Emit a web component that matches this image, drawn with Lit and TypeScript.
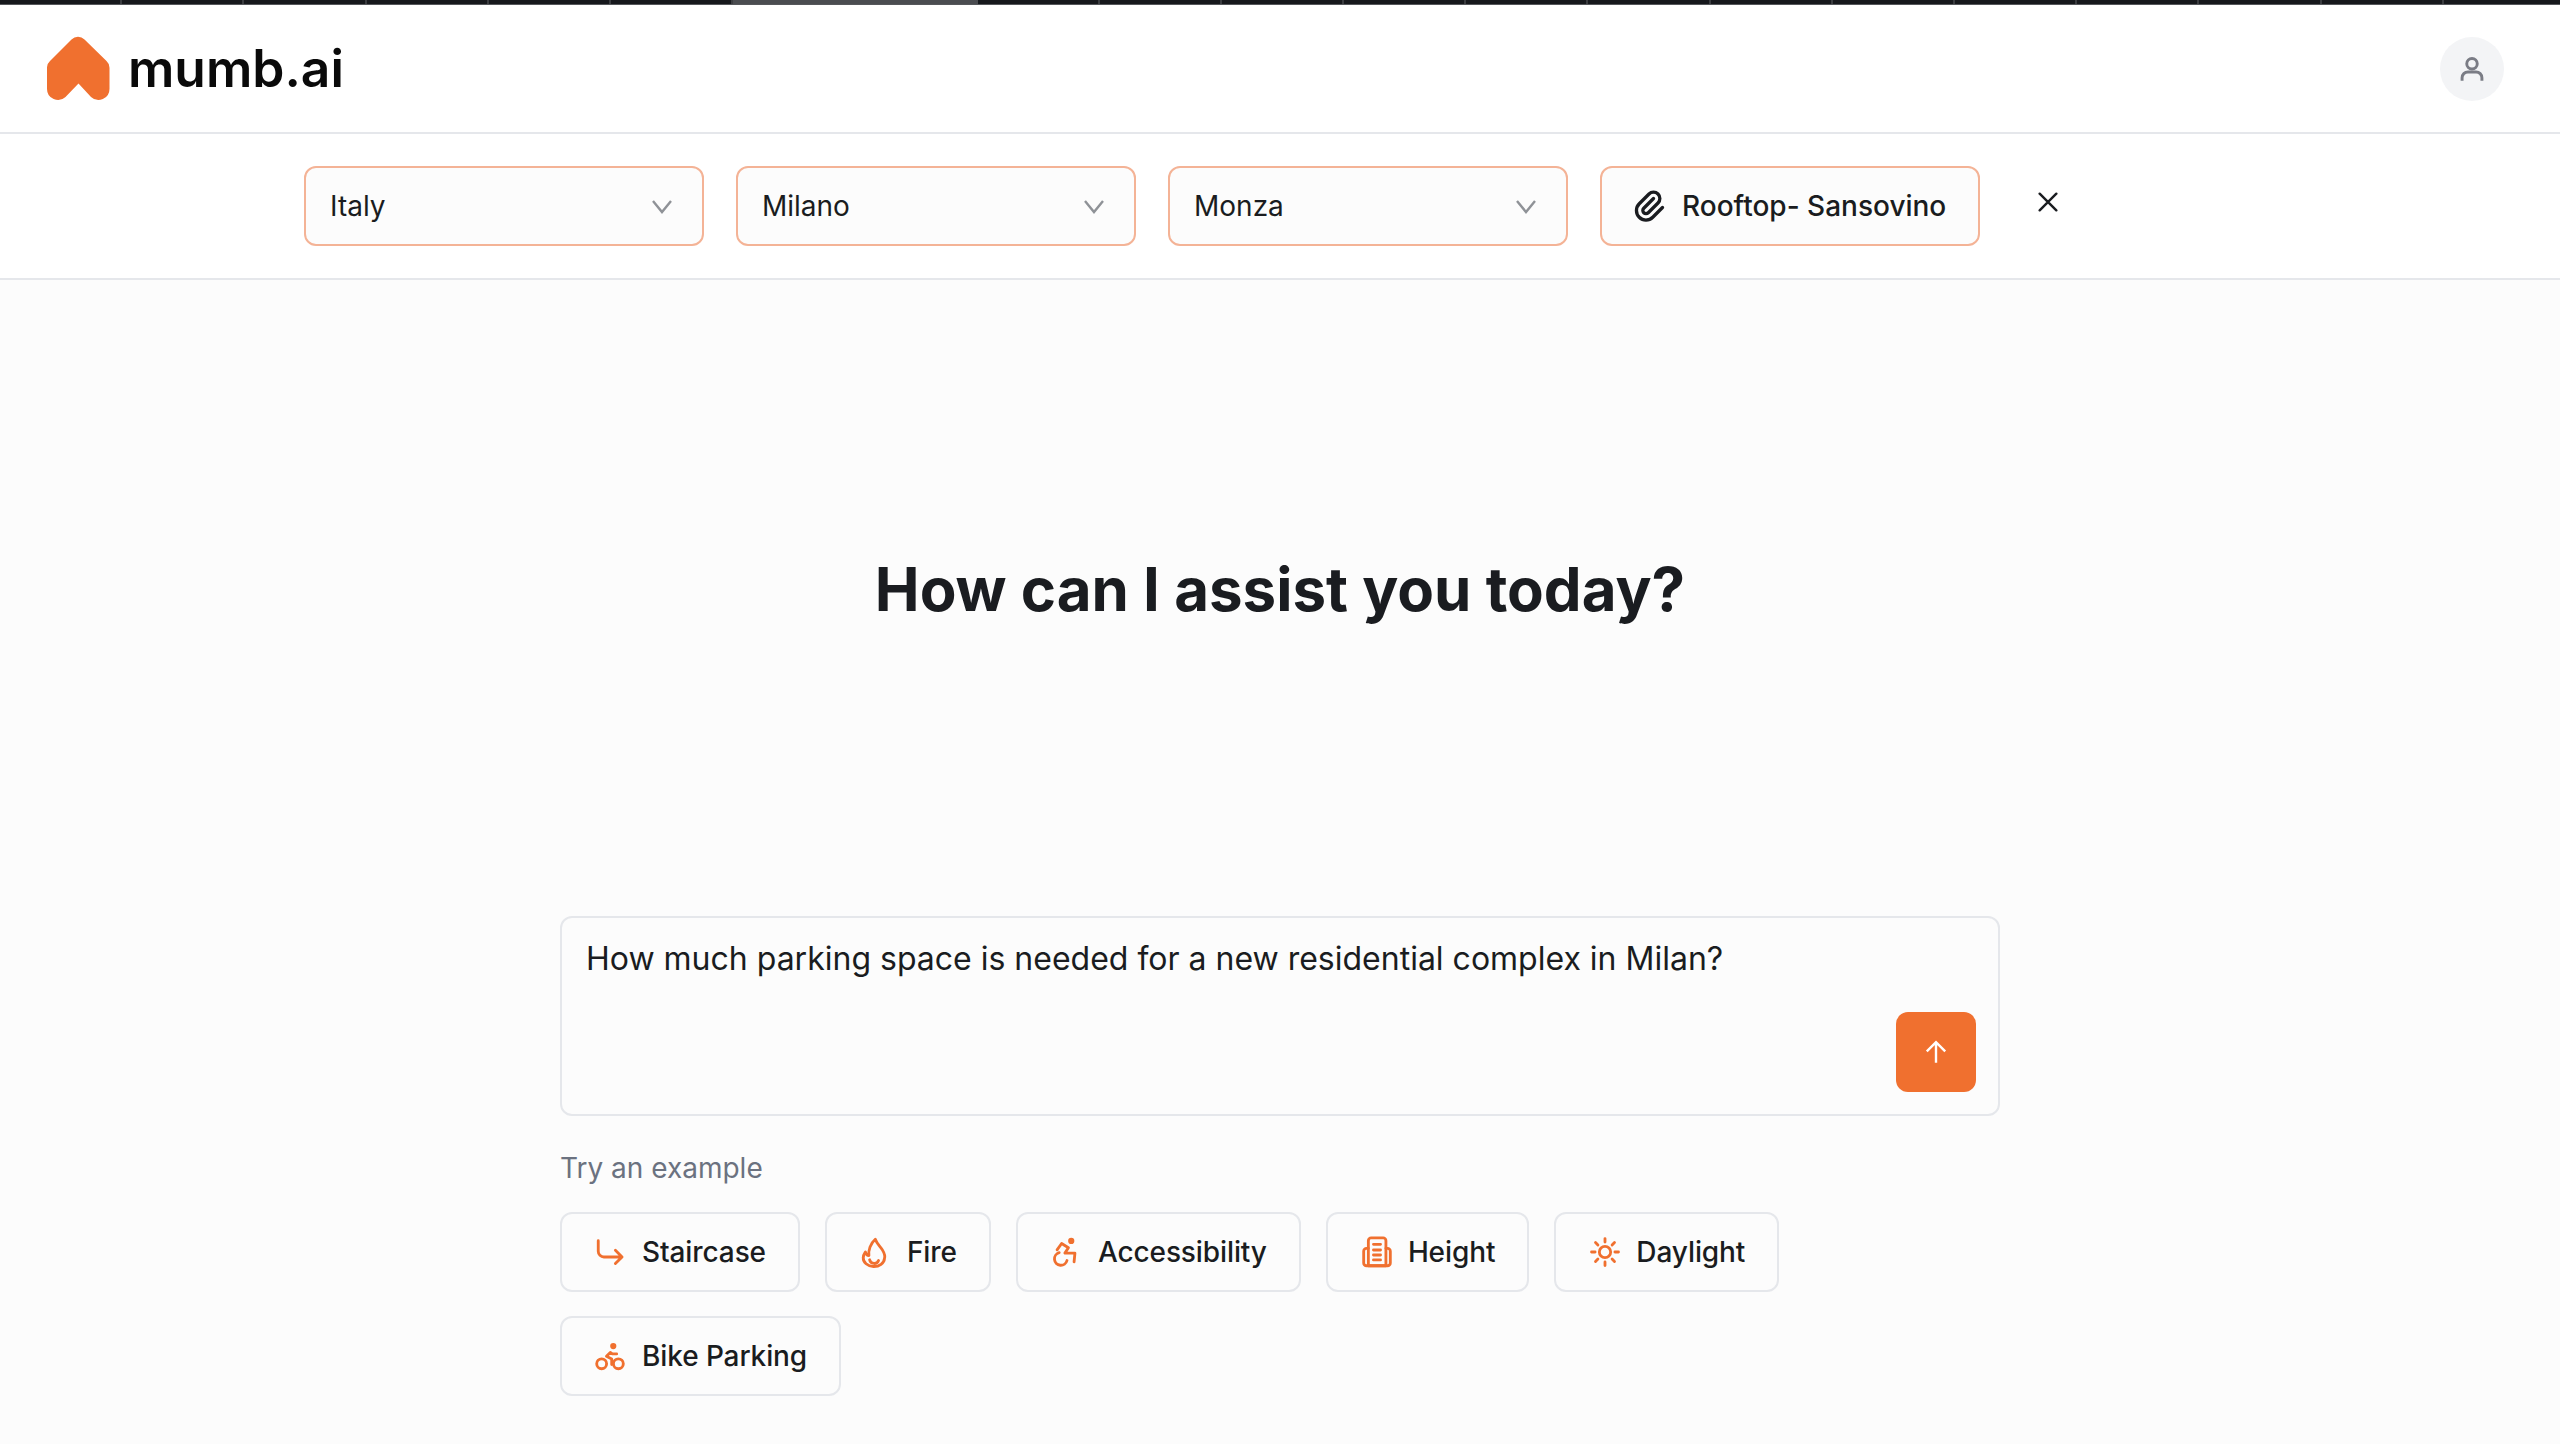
import { LitElement, html, css, svg } from "lit";
import { customElement } from "lit/decorators.js";

const icons: Record<string, unknown> = {
  Staircase: svg`<path d="M3 4v7.500a4 4 0 0 0 4 4h12.800l-4.700-4.700m0 9.400l4.700-4.700"/>`,
  Fire: svg`<path d="M11.500 3C12.500 6 15 8 16.500 10.500C18 13 18.500 15 18 16.500A7.500 6 0 0 1 3 16C3 14 3.800 13 4.500 12C5 13.500 6 14.500 7 14.500C6.500 11 8 6 11.500 3z"/><path d="M7.500 17.500a3.300 3.300 0 0 0 6.300 .5"/>`,
  Accessibility: svg`<circle cx="15" cy="4.200" r="1.200" fill="currentColor"/><path d="M5 10.500L8.200 6 13 9 10.500 12.800H17.600L17 19"/><path d="M6.500 12.500a4.500 4.500 0 1 0 5.500 5.500"/>`,
  Height: svg`<path d="M5.900 21.700V4a2 2 0 0 1 2-2h8.400a2 2 0 0 1 2 2V21.700z"/><path d="M5.900 9.400H4.600a2 2 0 0 0-2 2V19.700a2 2 0 0 0 2 2H19.400a2 2 0 0 0 2-2V11.400a2 2 0 0 0-2-2H18.300"/><path d="M9.500 6.600h5M9.500 10.600h5M9.500 14.100h5M9.500 17.600h5"/>`,
  Daylight: svg`<circle cx="12" cy="12" r="4"/><path d="M12 2.500v2.500M12 19v2.500M2.500 12H5M19 12h2.500M5.300 5.300l1.700 1.700M17 17l1.700 1.700M5.300 18.700L7 17M17 7l1.700-1.700"/>`,
  "Bike Parking": svg`<circle cx="5.400" cy="17.500" r="3.500"/><circle cx="17.200" cy="17.500" r="3.500"/><circle cx="13.600" cy="5" r="1.200" fill="currentColor"/><path d="M16 10.500H13L11.500 9.500 8.800 12.200 12.500 14.200V18"/>`,
};

const CHIPS = ["Staircase", "Fire", "Accessibility", "Height", "Daylight", "Bike Parking"];
const SELECTS = ["Italy", "Milano", "Monza"];

@customElement("app-root")
export class AppRoot extends LitElement {
  static styles = css`
    :host {
      display: block;
      width: 2560px;
      height: 1444px;
      overflow: hidden;
      background: #fcfcfc;
      font-family: Inter, "Liberation Sans", sans-serif;
      color: #1a1c20;
    }
    .strip {
      display: flex;
      height: 5px;
      background: #16181c;
      border-bottom: 1px solid #55575b;
      box-sizing: border-box;
    }
    .tab { flex: 0 0 122.2px; border-right: 2px solid #3a3c40; box-sizing: border-box; }
    .tab.active { flex-basis: 244.4px; background: #4a4c50; border-right-color: #4a4c50; }
    header {
      height: 129px;
      box-sizing: border-box;
      background: #fff;
      border-bottom: 2px solid #e5e7eb;
      display: flex;
      align-items: center;
      justify-content: space-between;
      padding: 0 56px 0 47px;
    }
    .brand { display: flex; align-items: center; gap: 18px; }
    .logo { width: 63px; height: 65px; display: block; }
    .wordmark {
      font-family: Inter, sans-serif;
      font-size: 51.5px;
      font-weight: 600;
      color: #0a0a0a;
      line-height: 1;
    }
    .avatar {
      width: 64px;
      height: 64px;
      border-radius: 50%;
      background: #f3f4f6;
      display: flex;
      align-items: center;
      justify-content: center;
      color: #7a7c85;
    }
    .avatar svg { width: 28px; height: 28px; fill: none; stroke: currentColor; stroke-width: 2.500; }
    .filters {
      height: 146px;
      box-sizing: border-box;
      background: #fff;
      border-bottom: 2px solid #e5e7eb;
      padding: 32px 0 0 304px;
      display: flex;
      align-items: flex-start;
      gap: 32px;
    }
    .field {
      height: 80px;
      box-sizing: border-box;
      background: #fcfcfc;
      border: 2px solid #f4b396;
      border-radius: 12px;
      display: flex;
      align-items: center;
      font-size: 28px;
      line-height: 36px;
    }
    .select { width: 400px; padding: 0 28px 0 24px; justify-content: space-between; }
    .select svg { width: 24px; height: 24px; fill: none; stroke: #8f9297; stroke-width: 2.400; }
    .file { width: 380px; padding-left: 29px; gap: 15px; font-weight: 500; }
    .file svg { width: 36px; height: 36px; fill: none; stroke: #1a1c20; stroke-width: 2.200; stroke-linecap: round; stroke-linejoin: round; }
    .close { margin: 26px 0 0 26px; width: 20px; height: 20px; }
    .close svg { display: block; width: 20px; height: 20px; fill: none; stroke: #1a1c20; stroke-width: 2.900; stroke-linecap: round; }
    main { padding: 0 560px; }
    h1 {
      margin: 0;
      padding-top: 273px;
      height: 636px;
      box-sizing: border-box;
      text-align: center;
      font-size: 60px;
      line-height: 72px;
      font-weight: 700;
      color: #1a1c20;
    }
    .composer {
      height: 200px;
      box-sizing: border-box;
      border: 2px solid #e5e7eb;
      border-radius: 12px;
      background: #fcfcfc;
      padding: 21px 22px 22px 24px;
      display: flex;
      flex-direction: column;
      justify-content: space-between;
    }
    .question { font-size: 32px; line-height: 40px; }
    .send {
      align-self: flex-end;
      width: 80px;
      height: 80px;
      border-radius: 12px;
      background: #f0702f;
      display: flex;
      align-items: center;
      justify-content: center;
    }
    .send svg { width: 26px; height: 26px; fill: none; stroke: #fff; stroke-width: 2.200; }
    .hint { margin: 34px 0 0; font-size: 28px; line-height: 36px; color: #6b7280; }
    .chips { margin-top: 26px; display: flex; flex-wrap: wrap; gap: 24px 25px; width: 1300px; }
    .chip {
      height: 80px;
      box-sizing: border-box;
      border: 2px solid #e5e7eb;
      border-radius: 12px;
      padding: 0 32px;
      display: flex;
      align-items: center;
      gap: 14px;
      font-size: 28px;
      font-weight: 500;
      letter-spacing: -0.1px;
      line-height: 36px;
    }
    .chip svg {
      width: 34px;
      height: 34px;
      fill: none;
      stroke: #f0702f;
      color: #f0702f;
      stroke-width: 2;
      stroke-linecap: round;
      stroke-linejoin: round;
    }
  `;

  render() {
    return html`
      <div class="strip">
        ${Array.from({ length: 6 }, () => html`<div class="tab"></div>`)}
        <div class="tab active"></div>
        ${Array.from({ length: 14 }, () => html`<div class="tab"></div>`)}
      </div>
      <header>
        <div class="brand">
          <svg class="logo" viewBox="0 0 63 65">
            <path fill="#f0702f" d="M24.500 3.500a9 9 0 0 1 13 0l22 21.500a9 9 0 0 1 3 7v21a11 11 0 0 1-18.500 8L31.500 47.500 18.500 61A11 11 0 0 1 0 53V32a9 9 0 0 1 3-7z"/>
          </svg>
          <span class="wordmark">mumb.ai</span>
        </div>
        <div class="avatar">
          <svg viewBox="0 0 24 24"><circle cx="12" cy="7.500" r="4.500"/><path d="M3.500 22v-2.500a5 5 0 0 1 5-5h7a5 5 0 0 1 5 5V22"/></svg>
        </div>
      </header>
      <div class="filters">
        ${SELECTS.map(
          (s) => html`<div class="field select"><span>${s}</span>
            <svg viewBox="0 0 24 24"><path d="M3 7l9 11 9-11"/></svg></div>`
        )}
        <div class="field file">
          <svg viewBox="0 0 24 24"><path d="M15 7l-6.500 6.500a1.500 1.500 0 0 0 3 3l6.500-6.500a3 3 0 0 0-6-6l-6.500 6.500a4.500 4.500 0 0 0 9 9l6.500-6.500"/></svg>
          <span>Rooftop- Sansovino</span>
        </div>
        <div class="close"><svg viewBox="0 0 24 24"><path d="M2 2l20 20M22 2L2 22"/></svg></div>
      </div>
      <main>
        <h1>How can I assist you today?</h1>
        <div class="composer">
          <div class="question">How much parking space is needed for a new residential complex in Milan?</div>
          <div class="send"><svg viewBox="0 0 24 24"><path d="M12 22V3M3.500 11.500L12 3l8.500 8.500"/></svg></div>
        </div>
        <p class="hint">Try an example</p>
        <div class="chips">
          ${CHIPS.map(
            (c) => html`<div class="chip"><svg viewBox="0 0 24 24">${icons[c]}</svg><span>${c}</span></div>`
          )}
        </div>
      </main>
    `;
  }
}
